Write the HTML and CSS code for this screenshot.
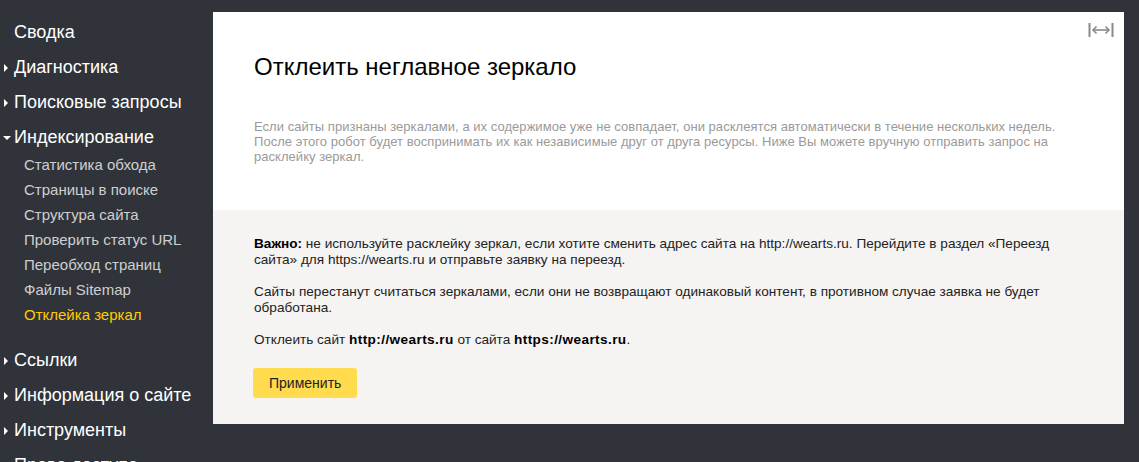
FILE: index.html
```html
<!DOCTYPE html>
<html lang="ru">
<head>
<meta charset="utf-8">
<link rel="stylesheet" href="styles.css">
</head>
<body>
<div class="layout">
  <nav class="sidebar">
    <div class="nav-item">Сводка</div>
    <div class="nav-item has-arrow">Диагностика</div>
    <div class="nav-item has-arrow">Поисковые запросы</div>
    <div class="nav-item has-arrow open">Индексирование</div>
    <div class="sub-list">
      <div class="sub-item">Статистика обхода</div>
      <div class="sub-item">Страницы в поиске</div>
      <div class="sub-item">Структура сайта</div>
      <div class="sub-item">Проверить статус URL</div>
      <div class="sub-item">Переобход страниц</div>
      <div class="sub-item">Файлы Sitemap</div>
      <div class="sub-item active">Отклейка зеркал</div>
    </div>
    <div class="nav-item has-arrow">Ссылки</div>
    <div class="nav-item has-arrow">Информация о сайте</div>
    <div class="nav-item has-arrow">Инструменты</div>
    <div class="nav-item has-arrow">Права доступа</div>
  </nav>
  <main class="panel">
    <svg class="expand-icon" width="26" height="16" viewBox="0 0 26 16">
      <path d="M1.5 1v14M24.5 1v14" stroke="#8a8a8a" stroke-width="2" fill="none"/>
      <path d="M5 8h16" stroke="#8a8a8a" stroke-width="1.6" fill="none"/>
      <path d="M8.5 4.5L5 8l3.5 3.5M17.5 4.5L21 8l-3.5 3.5" stroke="#8a8a8a" stroke-width="1.6" fill="none"/>
    </svg>
    <section class="panel-top">
      <h1 class="title">Отклеить неглавное зеркало</h1>
      <p class="desc">Если сайты признаны зеркалами, а их содержимое уже не совпадает, они расклеятся автоматически в течение нескольких недель. После этого робот будет воспринимать их как независимые друг от друга ресурсы. Ниже Вы можете вручную отправить запрос на расклейку зеркал.</p>
    </section>
    <section class="panel-bottom">
      <p class="text"><b>Важно:</b> не используйте расклейку зеркал, если хотите сменить адрес сайта на http://wearts.ru. Перейдите в раздел «Переезд сайта» для https://wearts.ru и отправьте заявку на переезд.</p>
      <p class="text">Сайты перестанут считаться зеркалами, если они не возвращают одинаковый контент, в противном случае заявка не будет обработана.</p>
      <p class="text">Отклеить сайт <b class="url">http://wearts.ru</b> от сайта <b class="url">https://wearts.ru</b>.</p>
      <button class="btn">Применить</button>
    </section>
  </main>
</div>
</body>
</html>
```

FILE: styles.css
```css
html, body {
  margin: 0;
  padding: 0;
  height: 100%;
  overflow: hidden;
}
body {
  background: #30343a;
  font-family: "Liberation Sans", Arial, sans-serif;
}
.layout {
  display: flex;
  align-items: flex-start;
}
.sidebar {
  width: 213px;
  flex: none;
  padding-top: 15px;
}
.nav-item {
  position: relative;
  padding-left: 14px;
  height: 35px;
  line-height: 35px;
  font-size: 18px;
  color: #ffffff;
  white-space: nowrap;
}
.nav-item.has-arrow::before {
  content: "";
  position: absolute;
  left: 4px;
  top: 14px;
  border-left: 4px solid #ffffff;
  border-top: 4px solid transparent;
  border-bottom: 4px solid transparent;
}
.nav-item.open::before {
  left: 3px;
  top: 16px;
  border-top: 4px solid #ffffff;
  border-left: 4px solid transparent;
  border-right: 4px solid transparent;
  border-bottom: 0;
}
.sub-list {
  margin-top: -3px;
  margin-bottom: 16px;
}
.sub-item {
  padding-left: 24px;
  height: 25px;
  line-height: 25px;
  font-size: 15px;
  color: #cfcfcf;
  white-space: nowrap;
}
.sub-item.active {
  color: #ffcc00;
}
.panel {
  position: relative;
  width: 911px;
  margin-top: 12px;
  flex: none;
}
.expand-icon {
  position: absolute;
  right: 10px;
  top: 10px;
}
.panel-top {
  background: #ffffff;
  padding: 42px 34px 46px 41px;
}
.title {
  margin: 0;
  font-size: 24px;
  line-height: 26px;
  font-weight: normal;
  color: #000000;
}
.desc {
  margin: 39px 0 0;
  font-size: 13px;
  line-height: 15px;
  letter-spacing: 0.04px;
  color: #9a9a9a;
}
.panel-bottom {
  background: #f5f4f2;
  padding: 26px 34px 26px 41px;
}
.text {
  margin: 0 0 16px;
  font-size: 13.6px;
  line-height: 16px;
  color: #222222;
}
.text b {
  color: #000000;
}
.text .url {
  letter-spacing: 0.4px;
}
.text:last-of-type {
  margin-bottom: 20px;
}
.btn {
  display: block;
  height: 30px;
  margin-left: -1px;
  padding: 0 16px;
  border: 0;
  border-radius: 3px;
  background: #ffdb4d;
  font-family: "Liberation Sans", Arial, sans-serif;
  font-size: 14px;
  color: #222222;
  cursor: pointer;
}
```
